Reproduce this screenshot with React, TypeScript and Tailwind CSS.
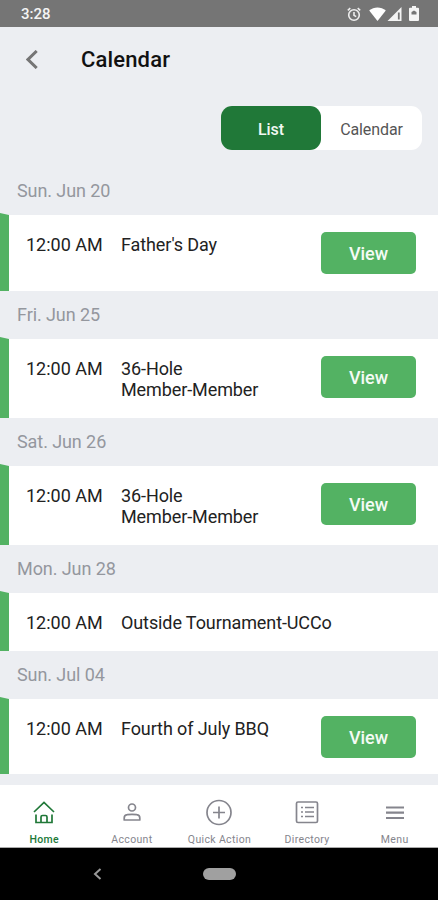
import type { ReactNode } from "react";

interface CalendarEvent {
  date: string;
  time: string;
  title: string;
  hasView: boolean;
  rowClass: string;
}

const EVENTS: CalendarEvent[] = [
  { date: "Sun. Jun 20", time: "12:00 AM", title: "Father's Day", hasView: true, rowClass: "h-[76px]" },
  { date: "Fri. Jun 25", time: "12:00 AM", title: "36-Hole\nMember-Member", hasView: true, rowClass: "h-[79px]" },
  { date: "Sat. Jun 26", time: "12:00 AM", title: "36-Hole\nMember-Member", hasView: true, rowClass: "h-[79px]" },
  { date: "Mon. Jun 28", time: "12:00 AM", title: "Outside Tournament-UCCo", hasView: false, rowClass: "h-[58px]" },
  { date: "Sun. Jul 04", time: "12:00 AM", title: "Fourth of July BBQ", hasView: true, rowClass: "h-[75px]" },
];

function StatusBar() {
  return (
    <div className="flex h-[27px] shrink-0 items-center bg-[#757575] pl-[21px] pr-[19px] pt-[2px] text-white">
      <span className="text-[15px] font-medium leading-none text-[#f4f4f4]">3:28</span>
      <svg className="ml-auto -mt-px" width="14" height="15" viewBox="0 0 14 15" fill="none" stroke="#eee" strokeWidth="1.6">
        <circle cx="7" cy="8" r="5.3" />
        <path d="M7 5v3.3l2.2 1.4M.8 3.4 3.3 1.2M13.2 3.4 10.7 1.2" />
      </svg>
      <svg className="ml-[8px] -mt-[2px]" width="17" height="14" viewBox="0 0 17 14" fill="currentColor">
        <path d="M.2 3.6C5-.7 12-.7 16.800 3.600L8.500 14z" />
      </svg>
      <svg className="ml-[1px] -mt-px" width="15" height="14" viewBox="0 0 15 14">
        <path d="M14.500 0v14H.5z" fill="#f4f4f4" />
        <path d="M11.800 5.500v7" stroke="#757575" strokeWidth="1.800" />
      </svg>
      <svg className="ml-[7px] -mt-[2px]" width="10" height="15" viewBox="0 0 10 15">
        <path d="M3 0h4v1.700h2a1 1 0 0 1 1 1V14a1 1 0 0 1-1 1H1a1 1 0 0 1-1-1V2.700a1 1 0 0 1 1-1h2z" fill="#f4f4f4" />
        <path d="M2.500 8.500V6L5 4.500 7.500 6v2.500z" fill="#757575" />
      </svg>
    </div>
  );
}

function Header() {
  return (
    <div className="flex h-[65px] shrink-0 items-center pl-[26px]">
      <svg className="-mt-px" width="12" height="19" viewBox="0 0 12 19" fill="none" stroke="#757575" strokeWidth="3">
        <path d="M10.700 1 2 9.500l8.700 8.500" />
      </svg>
      <h1 className="ml-[43px] text-[22px] font-medium leading-none tracking-[0.15px] text-[#111]">Calendar</h1>
    </div>
  );
}

function ViewToggle() {
  return (
    <div className="ml-[221px] mt-[14px] flex h-[44px] w-[201px] shrink-0 rounded-[11px] bg-white text-[16px]">
      <button className="w-[100px] rounded-[11px] bg-[#207838] pt-[3px] font-medium tracking-[-0.1px] text-[#f2f8f3]">List</button>
      <button className="flex-1 pt-[3px] tracking-[-0.1px] text-[#555]">Calendar</button>
    </div>
  );
}

function EventSection({ event }: { event: CalendarEvent }) {
  return (
    <section className="shrink-0">
      <h2 className="flex h-[48px] items-center pb-[2px] pl-[17px] text-[18px] tracking-[-0.08px] text-[#94979e]">{event.date}</h2>
      <div className={`flex bg-white text-[18px] leading-[21px] tracking-[-0.1px] text-[#222] ${event.rowClass}`}>
        {/* slanted top edge of the marker sticks out above the row */}
        <div className="-mt-[2px] w-[9px] shrink-0 bg-[#53b263] [clip-path:polygon(0_0,100%_2px,100%_100%,0_100%)]" />
        <span className="ml-[17px] w-[95px] shrink-0 pt-[19px] tracking-normal">{event.time}</span>
        <span className="whitespace-pre pt-[19px]">{event.title}</span>
        {event.hasView && (
          <button className="ml-auto mr-[22px] mt-[17px] h-[42px] w-[95px] rounded-[5px] bg-[#53b263] text-[18px] font-medium text-[#f4fbf5]">
            View
          </button>
        )}
      </div>
    </section>
  );
}

function NavItem({ label, active, children }: { label: string; active?: boolean; children: ReactNode }) {
  return (
    <div className={`flex flex-1 flex-col items-center ${active ? "text-[#207838]" : "text-[#85858d]"}`}>
      <svg width="28" height="28" viewBox="0 0 28 28" fill="none" stroke="currentColor" strokeWidth="1.7" className="ml-px mt-[13px]">
        {children}
      </svg>
      <span className={`ml-px mt-[8px] whitespace-nowrap text-[10.5px] leading-[12px] tracking-[0.35px] ${active ? "font-medium" : ""}`}>
        {label}
      </span>
    </div>
  );
}

function BottomNav() {
  return (
    <nav className="mt-auto flex h-[63px] shrink-0 border-b border-[#aaa] bg-white">
      <NavItem label="Home" active>
        <path d="M4 14 14 4.500 24 14M6 16.500v8h16v-8M11 24.500V19q0-1.500 1.500-1.500h3Q17 17.500 17 19v5.500" />
      </NavItem>
      <NavItem label="Account">
        <circle cx="14" cy="9.500" r="3.500" />
        <path d="M6.200 22v-2q0-3 3-3.300 4.800-.8 9.600 0 3 .3 3 3.300v2z" strokeLinejoin="round" />
      </NavItem>
      <NavItem label="Quick Action">
        <circle cx="14" cy="14.500" r="12" />
        <path d="M14 8.500v12M8 14.500h12" />
      </NavItem>
      <NavItem label="Directory">
        <rect x="3.500" y="4" width="21" height="20.500" rx="1.500" />
        <path d="M8 9.500h2M12 9.500h9M8 14h2M12 14h9M8 18.500h2M12 18.500h9" />
      </NavItem>
      <NavItem label="Menu">
        <path d="M5 9.500h18M5 14.700h18M5 20h18" strokeWidth="2.200" />
      </NavItem>
    </nav>
  );
}

function SystemBar() {
  return (
    <div className="flex h-[52px] shrink-0 items-center bg-black pl-[93px]">
      <svg width="9" height="12" viewBox="0 0 9 12" fill="none" stroke="#999" strokeWidth="2">
        <path d="M7.500 1 2 6l5.500 5" />
      </svg>
      <div className="ml-[101px] h-[12px] w-[33px] rounded-full bg-[#a0a0a0]" />
    </div>
  );
}

export default function App() {
  return (
    <div className="flex h-[900px] w-[438px] flex-col overflow-hidden bg-[#eceef2] font-['Roboto',sans-serif]">
      <StatusBar />
      <Header />
      <ViewToggle />
      <div className="mt-[17px] flex flex-col">
        {EVENTS.map((event) => (
          <EventSection key={event.date} event={event} />
        ))}
      </div>
      <BottomNav />
      <SystemBar />
    </div>
  );
}
